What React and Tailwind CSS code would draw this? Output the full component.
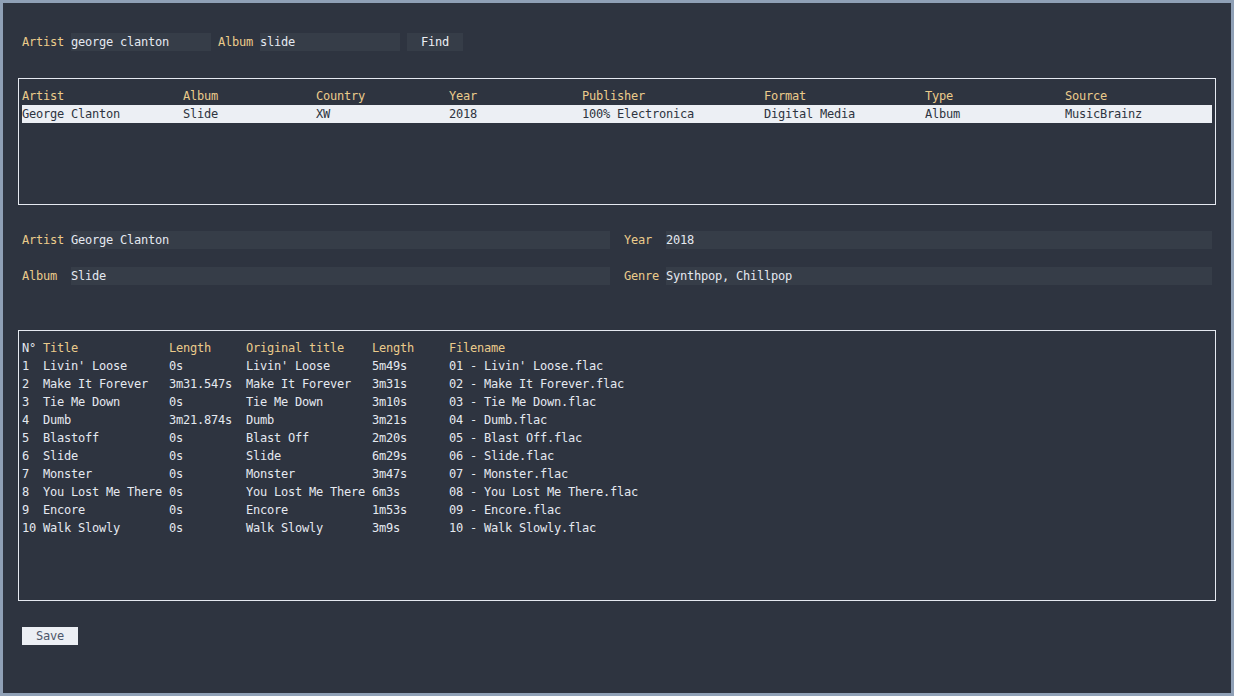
import React from 'react';

const results = [
    {
        artist: 'George Clanton',
        album: 'Slide',
        country: 'XW',
        year: '2018',
        publisher: '100% Electronica',
        format: 'Digital Media',
        type: 'Album',
        source: 'MusicBrainz',
    },
];

const tracks = [
    ['1', "Livin' Loose", '0s', "Livin' Loose", '5m49s', "01 - Livin' Loose.flac"],
    ['2', 'Make It Forever', '3m31.547s', 'Make It Forever', '3m31s', '02 - Make It Forever.flac'],
    ['3', 'Tie Me Down', '0s', 'Tie Me Down', '3m10s', '03 - Tie Me Down.flac'],
    ['4', 'Dumb', '3m21.874s', 'Dumb', '3m21s', '04 - Dumb.flac'],
    ['5', 'Blastoff', '0s', 'Blast Off', '2m20s', '05 - Blast Off.flac'],
    ['6', 'Slide', '0s', 'Slide', '6m29s', '06 - Slide.flac'],
    ['7', 'Monster', '0s', 'Monster', '3m47s', '07 - Monster.flac'],
    ['8', 'You Lost Me There', '0s', 'You Lost Me There', '6m3s', '08 - You Lost Me There.flac'],
    ['9', 'Encore', '0s', 'Encore', '1m53s', '09 - Encore.flac'],
    ['10', 'Walk Slowly', '0s', 'Walk Slowly', '3m9s', '10 - Walk Slowly.flac'],
];

// column widths in px (7px per cell)
const resultCols = [
    { key: 'artist', label: 'Artist', w: 'w-[161px]' },
    { key: 'album', label: 'Album', w: 'w-[133px]' },
    { key: 'country', label: 'Country', w: 'w-[133px]' },
    { key: 'year', label: 'Year', w: 'w-[133px]' },
    { key: 'publisher', label: 'Publisher', w: 'w-[182px]' },
    { key: 'format', label: 'Format', w: 'w-[161px]' },
    { key: 'type', label: 'Type', w: 'w-[140px]' },
    { key: 'source', label: 'Source', w: 'flex-1' },
];

const trackCols = [
    { label: 'N°', w: 'w-[21px]', num: true },
    { label: 'Title', w: 'w-[126px]' },
    { label: 'Length', w: 'w-[77px]' },
    { label: 'Original title', w: 'w-[126px]' },
    { label: 'Length', w: 'w-[77px]' },
    { label: 'Filename', w: 'flex-1' },
];

const Field = ({ label, value, labelW }) => (
    <div className="flex h-[18px] items-center">
        <span className={`${labelW} shrink-0 text-[#ebcb8b]`}>{label}</span>
        <div className="flex h-[18px] flex-1 items-center bg-[#363d48] text-[#e5e9f0]">{value}</div>
    </div>
);

export default function App() {
    return (
        <div
            className="h-[696px] w-full border-[3px] border-[#8fa0b6] bg-[#2e3440] px-[15px] text-[12px] leading-[18px] tracking-[-0.22px] text-[#e5e9f0]"
            style={{ fontFamily: '"DejaVu Sans Mono", "Liberation Mono", monospace' }}
        >
            {/* Search */}
            <div className="mt-[30px] flex h-[18px] items-center pl-[4px]">
                <span className="w-[49px] text-[#ebcb8b]">Artist</span>
                <div className="flex h-[18px] w-[140px] items-center bg-[#363d48]">george clanton</div>
                <span className="ml-[7px] w-[42px] text-[#ebcb8b]">Album</span>
                <div className="flex h-[18px] w-[140px] items-center bg-[#363d48]">slide</div>
                <button className="ml-[7px] flex h-[18px] w-[56px] items-center justify-center bg-[#363d48] text-[#eceff4]">
                    Find
                </button>
            </div>

            {/* Results */}
            <div className="mt-[27px] h-[127px] border border-[#e5e9f0] px-[3px] pt-[8px]">
                <div className="flex h-[18px] items-center text-[#ebcb8b]">
                    {resultCols.map((c) => (
                        <span key={c.key} className={`${c.w} shrink-0`}>
                            {c.label}
                        </span>
                    ))}
                </div>
                {results.map((r, i) => (
                    <div key={i} className="flex h-[18px] items-center bg-[#eceff4] text-[#2e3440]">
                        {resultCols.map((c) => (
                            <span key={c.key} className={`${c.w} shrink-0`}>
                                {r[c.key]}
                            </span>
                        ))}
                    </div>
                ))}
            </div>

            {/* Album details */}
            <div className="mt-[26px] grid grid-cols-2 gap-x-[14px] gap-y-[18px] px-[4px]">
                <Field label="Artist" value="George Clanton" labelW="w-[49px]" />
                <Field label="Year" value="2018" labelW="w-[42px]" />
                <Field label="Album" value="Slide" labelW="w-[49px]" />
                <Field label="Genre" value="Synthpop, Chillpop" labelW="w-[42px]" />
            </div>

            {/* Tracks */}
            <div className="mt-[45px] h-[271px] border border-[#e5e9f0] px-[3px] pt-[8px]">
                <div className="flex h-[18px] items-center">
                    {trackCols.map((c, i) => (
                        <span key={i} className={`${c.w} shrink-0 ${c.num ? 'text-[#e5e9f0]' : 'text-[#ebcb8b]'}`}>
                            {c.label}
                        </span>
                    ))}
                </div>
                {tracks.map((t) => (
                    <div key={t[0]} className="flex h-[18px] items-center whitespace-pre">
                        {t.map((v, i) => (
                            <span key={i} className={`${trackCols[i].w} shrink-0`}>
                                {v}
                            </span>
                        ))}
                    </div>
                ))}
            </div>

            {/* Save */}
            <div className="mt-[26px] pl-[4px]">
                <button className="flex h-[18px] w-[56px] items-center justify-center bg-[#eceff4] text-[#4c566a]">
                    Save
                </button>
            </div>
        </div>
    );
}
